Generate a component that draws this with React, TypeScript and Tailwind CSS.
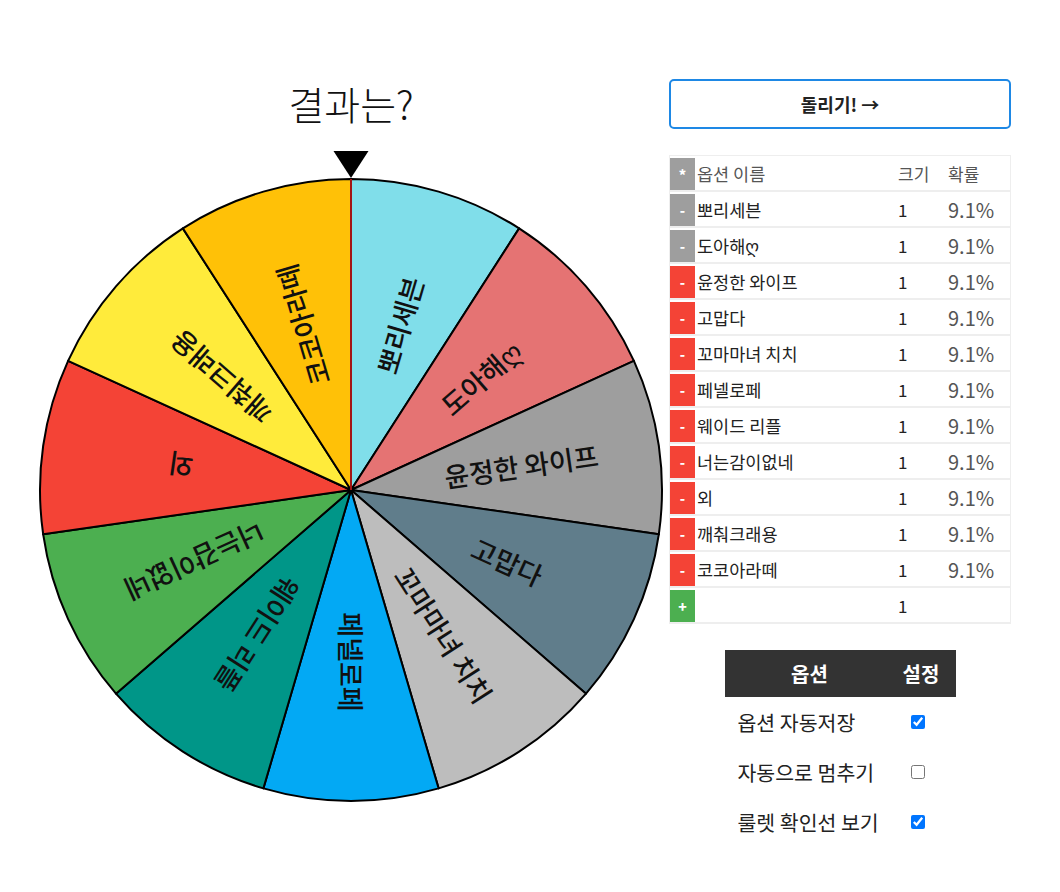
import React from 'react';

type Item = { name: string; color: string; btn: string };

const items: Item[] = [
  { name: '뽀리세븐', color: '#80deea', btn: '#9e9e9e' },
  { name: '도아해ღ', color: '#e57373', btn: '#9e9e9e' },
  { name: '윤정한 와이프', color: '#9e9e9e', btn: '#f44336' },
  { name: '고맙다', color: '#607d8b', btn: '#f44336' },
  { name: '꼬마마녀 치치', color: '#bdbdbd', btn: '#f44336' },
  { name: '페넬로페', color: '#03a9f4', btn: '#f44336' },
  { name: '웨이드 리플', color: '#009688', btn: '#f44336' },
  { name: '너는감이없네', color: '#4caf50', btn: '#f44336' },
  { name: '외', color: '#f44336', btn: '#f44336' },
  { name: '깨춰크래용', color: '#ffeb3b', btn: '#f44336' },
  { name: '코코아라떼', color: '#ffc107', btn: '#f44336' },
];

const FONT = '"Noto Sans CJK KR", "Noto Sans", "DejaVu Sans", sans-serif';

function Wheel() {
  const cx = 318;
  const cy = 339;
  const r = 311;
  const step = 360 / items.length;
  const pt = (deg: number, rad: number) => {
    const a = (deg * Math.PI) / 180;
    return [cx + rad * Math.sin(a), cy - rad * Math.cos(a)];
  };

  return (
    <svg width={636} height={652} viewBox="0 0 636 652" className="mt-[24px] block">
      {items.map((it, i) => {
        const [x1, y1] = pt(i * step, r);
        const [x2, y2] = pt((i + 1) * step, r);
        return (
          <path
            key={'s' + i}
            d={`M${cx} ${cy} L${x1} ${y1} A${r} ${r} 0 0 1 ${x2} ${y2} Z`}
            fill={it.color}
            stroke="#000"
            strokeWidth={2}
            strokeLinejoin="round"
          />
        );
      })}
      {items.map((it, i) => {
        const mid = (i + 0.5) * step;
        const [tx, ty] = pt(mid, 172);
        return (
          <text
            key={'t' + i}
            x={tx}
            y={ty}
            textAnchor="middle"
            dominantBaseline="central"
            fontSize={27}
            fontWeight={500}
            fill="#111"
            style={{ fontFamily: FONT }}
            transform={`rotate(${mid - 90} ${tx} ${ty})`}
          >
            {it.name}
          </text>
        );
      })}
      {/* 확인선 */}
      <line x1={cx} y1={cy} x2={cx} y2={cy - r} stroke="#a31515" strokeWidth={2} />
      <polygon points="300.5,0 335.5,0 318,27" fill="#000" />
    </svg>
  );
}

function Row({ mark, btn, name, size, prob, head }: { mark: string; btn: string; name: string; size: string; prob: string; head?: boolean }) {
  return (
    <div className="flex items-center pt-[2px] border-b-2 border-[#eee]">
      <div
        className="w-[25px] h-8 flex items-center justify-center text-white text-[14px] font-black"
        style={{ backgroundColor: btn }}
      >
        {mark}
      </div>
      <div className={`ml-[2px] w-[201px] text-[17.5px] ${head ? 'text-[#555]' : 'text-[#222]'}`}>{name}</div>
      <div className={`w-[50px] text-[17px] ${head ? 'text-[#555]' : 'text-[#222]'}`}>{size}</div>
      <div className={`flex-1 ${head ? 'text-[17px] text-[#555]' : 'text-[20px] text-[#555]'}`}>{prob}</div>
    </div>
  );
}

export default function App() {
  const settings = [
    { label: '옵션 자동저장', on: true },
    { label: '자동으로 멈추기', on: false },
    { label: '룰렛 확인선 보기', on: true },
  ];

  return (
    <div className="min-h-screen bg-white flex items-start pt-[79px] pl-[33px]" style={{ fontFamily: FONT }}>
      {/* 룰렛 */}
      <div className="w-[636px] flex flex-col items-center">
        <h1 className="h-[48px] text-[39px] leading-[48px] font-light text-[#111]">결과는?</h1>
        <Wheel />
      </div>

      {/* 오른쪽 패널 */}
      <div className="w-[342px] flex flex-col">
        <button className="h-[50px] border-2 border-[#1e88e5] rounded-[5px] bg-white text-[18px] font-bold text-[#222]">
          돌리기! →
        </button>

        <div className="mt-[26px] border border-[#eee] border-b-0">
          <Row head mark="*" btn="#9e9e9e" name="옵션 이름" size="크기" prob="확률" />
          {items.map((it) => (
            <Row key={it.name} mark="-" btn={it.btn} name={it.name} size="1" prob="9.1%" />
          ))}
          <Row mark="+" btn="#4caf50" name="" size="1" prob="" />
        </div>

        <div className="mt-[26px] w-[231px] self-center">
          <div className="h-[47px] bg-[#333] flex items-center text-white text-[20px] font-bold">
            <div className="w-[170px] text-center">옵션</div>
            <div className="flex-1 pl-[8px]">설정</div>
          </div>
          {settings.map((s) => (
            <div key={s.label} className="h-[50px] flex items-center text-[20.5px] text-[#222]">
              <div className="w-[170px] pl-[13px] whitespace-nowrap">{s.label}</div>
              <div className="flex-1 pl-[16px] flex items-center">
                <input type="checkbox" defaultChecked={s.on} className="w-[14px] h-[14px] accent-[#0075ff]" />
              </div>
            </div>
          ))}
        </div>
      </div>
    </div>
  );
}
